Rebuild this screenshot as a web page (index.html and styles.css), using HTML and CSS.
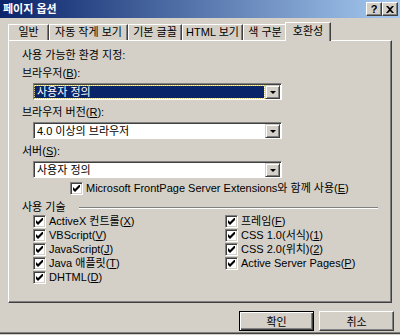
FILE: index.html
```html
<!DOCTYPE html>
<html lang="ko">
<head>
<meta charset="utf-8">
<title>페이지 옵션</title>
<link rel="stylesheet" href="styles.css">
</head>
<body>
<div class="window">
  <div class="titlebar">
    <span class="title">페이지 옵션</span>
    <div class="tb-buttons">
      <span class="tb-btn">?</span>
      <span class="tb-btn close">
        <svg width="8" height="7" viewBox="0 0 8 7"><path d="M0 0h2l2 2 2-2h2L5 3.5 8 7H6L4 5 2 7H0l3-3.5z" fill="#000"/></svg>
      </span>
    </div>
  </div>
  <div class="tabs">
    <div class="tab t1">일반</div>
    <div class="tab t2">자동 작게 보기</div>
    <div class="tab t3">기본 글꼴</div>
    <div class="tab t4">HTML 보기</div>
    <div class="tab t5">색 구분</div>
    <div class="tab t6 active">호환성</div>
  </div>
  <div class="panel">
    <div class="label first">사용 가능한 환경 지정:</div>
    <div class="label">브라우저(<u>B</u>):</div>
    <div class="select focus"><span class="value">사용자 정의</span><span class="drop"></span></div>
    <div class="label">브라우저 버전(<u>R</u>):</div>
    <div class="select"><span class="value">4.0 이상의 브라우저</span><span class="drop"></span></div>
    <div class="label">서버(<u>S</u>):</div>
    <div class="select"><span class="value">사용자 정의</span><span class="drop"></span></div>
    <div class="check fp"><span class="cb"><svg width="7" height="7" viewBox="0 0 7 7"><path d="M0 2v3l2 2 5-5V-1L2 4z" fill="#000"/></svg></span>Microsoft FrontPage Server Extensions와 함께 사용(<u>E</u>)</div>
    <div class="group-head"><span>사용 기술</span><span class="etch"></span></div>
    <div class="tech">
      <div class="col left">
        <div class="check"><span class="cb"><svg width="7" height="7" viewBox="0 0 7 7"><path d="M0 2v3l2 2 5-5V-1L2 4z" fill="#000"/></svg></span>ActiveX 컨트롤(<u>X</u>)</div>
        <div class="check"><span class="cb"><svg width="7" height="7" viewBox="0 0 7 7"><path d="M0 2v3l2 2 5-5V-1L2 4z" fill="#000"/></svg></span>VBScript(<u>V</u>)</div>
        <div class="check"><span class="cb"><svg width="7" height="7" viewBox="0 0 7 7"><path d="M0 2v3l2 2 5-5V-1L2 4z" fill="#000"/></svg></span>JavaScript(<u>J</u>)</div>
        <div class="check"><span class="cb"><svg width="7" height="7" viewBox="0 0 7 7"><path d="M0 2v3l2 2 5-5V-1L2 4z" fill="#000"/></svg></span>Java 애플릿(<u>T</u>)</div>
        <div class="check"><span class="cb"><svg width="7" height="7" viewBox="0 0 7 7"><path d="M0 2v3l2 2 5-5V-1L2 4z" fill="#000"/></svg></span>DHTML(<u>D</u>)</div>
      </div>
      <div class="col">
        <div class="check"><span class="cb"><svg width="7" height="7" viewBox="0 0 7 7"><path d="M0 2v3l2 2 5-5V-1L2 4z" fill="#000"/></svg></span>프레임(<u>F</u>)</div>
        <div class="check"><span class="cb"><svg width="7" height="7" viewBox="0 0 7 7"><path d="M0 2v3l2 2 5-5V-1L2 4z" fill="#000"/></svg></span>CSS 1.0(서식)(<u>1</u>)</div>
        <div class="check"><span class="cb"><svg width="7" height="7" viewBox="0 0 7 7"><path d="M0 2v3l2 2 5-5V-1L2 4z" fill="#000"/></svg></span>CSS 2.0(위치)(<u>2</u>)</div>
        <div class="check"><span class="cb"><svg width="7" height="7" viewBox="0 0 7 7"><path d="M0 2v3l2 2 5-5V-1L2 4z" fill="#000"/></svg></span>Active Server Pages(<u>P</u>)</div>
      </div>
    </div>
  </div>
  <div class="footer">
    <button class="btn default">확인</button>
    <button class="btn">취소</button>
  </div>
</div>
</body>
</html>
```
FILE: styles.css
```css
* { box-sizing: border-box; }
html, body { margin: 0; padding: 0; }
body {
  width: 400px;
  height: 335px;
  overflow: hidden;
  background: #d4d0c8;
  font-family: "Liberation Sans", "Noto Sans CJK KR", sans-serif;
  font-size: 11px;
  color: #000;
}
u { text-decoration: underline; text-underline-offset: 1px; }
.window {
  width: 400px;
  height: 334px;
  display: flex;
  flex-direction: column;
  border-bottom: 1px solid #404040;
  box-shadow: inset 0 -1px #808080;
}
.titlebar {
  height: 18px;
  flex: none;
  display: flex;
  align-items: center;
  justify-content: space-between;
  background: linear-gradient(to right, #0a246a, #a6caf0);
  padding: 0 2px 0 3px;
}
.title { color: #fff; font-weight: bold; font-size: 11px; line-height: 14px; }
.tb-buttons { display: flex; }
.tb-btn {
  width: 16px;
  height: 14px;
  background: #d4d0c8;
  border: 1px solid;
  border-color: #fff #404040 #404040 #fff;
  box-shadow: inset -1px -1px #808080;
  display: flex;
  align-items: center;
  justify-content: center;
  font-weight: bold;
  font-size: 11px;
  line-height: 12px;
}
.tabs {
  flex: none;
  height: 22px;
  display: flex;
  align-items: flex-end;
  padding-left: 8px;
}
.tab {
  height: 16px;
  border-top: 1px solid #fff;
  border-left: 1px solid #fff;
  border-right: 1px solid #404040;
  box-shadow: inset -1px 0 #808080;
  line-height: 15px;
  text-align: center;
  white-space: nowrap;
}
.t1 { width: 41px; }
.t2 { width: 79px; }
.t3 { width: 54px; }
.t4 { width: 61px; }
.t5 { width: 44px; }
.tab.active {
  width: 46px;
  height: 19px;
  margin: 0 0 -1px -2px;
  background: #d4d0c8;
  position: relative;
  z-index: 1;
  line-height: 16px;
}
.panel {
  flex: none;
  height: 263px;
  margin: 0 8px;
  border: 1px solid;
  border-color: #fff #404040 #404040 #fff;
  box-shadow: inset -1px -1px #808080;
  padding: 7px 13px 0 13px;
  display: flex;
  flex-direction: column;
}
.label { line-height: 14px; height: 14px; margin-top: 5px; white-space: nowrap; }
.label.first { margin-top: 0; margin-bottom: -1px; }
.select {
  margin: 3px 0 0 11px;
  width: 249px;
  height: 17px;
  border: 1px solid;
  border-color: #808080 #fff #fff #808080;
  box-shadow: inset 1px 1px #404040;
  background: #fff;
  display: flex;
  padding: 1px 1px 0 1px;
}
.value {
  flex: 1;
  line-height: 13px;
  padding: 0 2px;
  margin: 1px 1px 1px 0;
  white-space: nowrap;
}
.select.focus .value {
  background: #0a246a;
  color: #fff;
  outline: 1px dotted #d8c87a;
}
.drop {
  width: 15px;
  height: 14px;
  flex: none;
  background: #d4d0c8;
  border: 1px solid;
  border-color: #d4d0c8 #404040 #404040 #d4d0c8;
  box-shadow: inset 1px 1px #fff, inset -1px -1px #808080;
  display: flex;
  align-items: center;
  justify-content: center;
}
.drop::after {
  content: "";
  border-left: 3px solid transparent;
  border-right: 3px solid transparent;
  border-top: 3px solid #000;
  margin-top: 1px;
}
.check {
  display: flex;
  align-items: center;
  height: 14px;
  line-height: 14px;
  white-space: nowrap;
}
.cb {
  width: 13px;
  height: 13px;
  flex: none;
  margin-right: 3px;
  background: #fff;
  border: 1px solid;
  border-color: #808080 #fff #fff #808080;
  box-shadow: inset 1px 1px #404040, inset -1px -1px #d4d0c8;
  display: flex;
  align-items: center;
  justify-content: center;
}
.fp { margin: 3px 0 0 48px; }
.group-head {
  display: flex;
  align-items: center;
  height: 13px;
  margin-top: 6px;
  line-height: 13px;
}
.etch {
  flex: 1;
  height: 2px;
  margin-left: 13px;
  border-top: 1px solid #808080;
  border-bottom: 1px solid #fff;
}
.tech { display: flex; margin-left: 11px; }
.col.left { width: 192px; }
.footer {
  flex: none;
  display: flex;
  justify-content: flex-end;
  gap: 5px;
  padding: 8px 6px 0 0;
}
.btn {
  width: 75px;
  height: 20px;
  padding: 0;
  font-family: inherit;
  font-size: 11px;
  color: #000;
  background: #d4d0c8;
  border: 1px solid;
  border-color: #fff #404040 #404040 #fff;
  box-shadow: inset -1px -1px #808080;
}
.btn.default {
  border: 1px solid #000;
  box-shadow: inset 1px 1px #fff, inset -1px -1px #404040, inset -2px -2px #808080;
}
```
